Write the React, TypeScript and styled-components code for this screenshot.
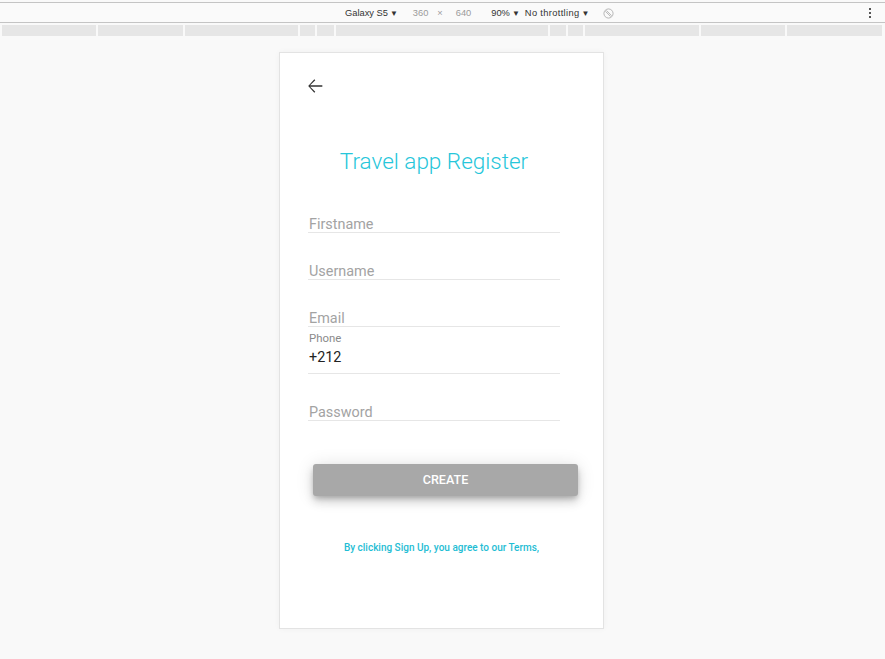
import React from "react";
import styled, { createGlobalStyle } from "styled-components";

const GlobalStyle = createGlobalStyle`
  html, body {
    margin: 0;
    padding: 0;
    background: #f9f9f9;
  }
  body {
    font-family: Roboto, "Noto Sans", sans-serif;
  }
  * {
    box-sizing: border-box;
  }
`;

const Page = styled.div`
  width: 885px;
  height: 659px;
  overflow: hidden;
  background: #f9f9f9;
  padding-top: 2px;
`;

const DeviceBar = styled.div`
  height: 21px;
  border-top: 1px solid #c4c4c4;
  border-bottom: 1px solid #c4c4c4;
  background: #fafafa;
  display: flex;
  align-items: center;
  padding: 1px 0 0 345px;
  font-family: "Liberation Sans", Arial, sans-serif;
  font-size: 9.3px;
  color: #333;
`;

const BarText = styled.span<{ $muted?: boolean; $gap?: number; $wide?: boolean }>`
  margin-left: ${({ $gap }) => $gap ?? 0}px;
  color: ${({ $muted }) => ($muted ? "#9a9a9a" : "#333")};
  letter-spacing: ${({ $wide }) => ($wide ? "0.35px" : "0")};
  white-space: nowrap;
`;

const Caret = styled.span`
  font-size: 8px;
  margin-left: 2px;
  color: #333;
`;

const RotateIcon = styled.svg`
  margin-left: 14px;
`;

const Kebab = styled.div`
  margin-left: auto;
  margin-right: 14px;
  display: flex;
  flex-direction: column;
  gap: 2px;

  span {
    width: 2px;
    height: 2px;
    background: #555;
  }
`;

const Ruler = styled.div`
  margin-top: 2px;
  height: 11px;
  display: flex;
  gap: 2px;
  padding-left: 2px;
`;

const RulerSegment = styled.div<{ $w: number }>`
  width: ${({ $w }) => $w}px;
  height: 100%;
  background: #e6e6e6;
`;

const Phone = styled.div`
  margin: 16px 0 0 279px;
  width: 325px;
  height: 577px;
  background: #fff;
  border: 1px solid #e3e3e3;
  box-shadow: 0 0 6px rgba(0, 0, 0, 0.04);
  display: flex;
  flex-direction: column;
`;

const BackButton = styled.button`
  margin: 22px 0 0 24px;
  padding: 0;
  width: 22px;
  height: 22px;
  border: none;
  background: none;
  display: flex;
  cursor: pointer;
`;

const Title = styled.h1`
  margin: 51px 0 0;
  padding-right: 15px;
  text-align: center;
  font-weight: 300;
  font-size: 22.5px;
  line-height: 26px;
  color: #26c6da;
`;

const Form = styled.form`
  margin: 12px 0 0 28px;
  width: 252px;
  display: flex;
  flex-direction: column;
`;

const Field = styled.div`
  height: 47px;
  display: flex;
  flex-direction: column;
  justify-content: flex-end;
  border-bottom: 1px solid #e6e6e6;
`;

const FloatLabel = styled.label`
  font-size: 11.4px;
  line-height: 14px;
  color: #8a8a8a;
  margin-bottom: 4px;
  padding-left: 1px;
`;

const Input = styled.input<{ $filled?: boolean }>`
  border: none;
  outline: none;
  padding: ${({ $filled }) => ($filled ? "0 0 7px 1px" : "1px 0 0 1px")};
  margin: 0;
  height: ${({ $filled }) => ($filled ? 24 : 17)}px;
  line-height: 17px;
  font-family: Roboto, sans-serif;
  font-size: 14.4px;
  color: #222;
  background: transparent;

  &::placeholder {
    color: #a3a3a3;
    opacity: 1;
  }
`;

const CreateButton = styled.button`
  margin: 43px 0 0 33px;
  width: 265px;
  height: 32px;
  padding: 0 0 2px;
  border: none;
  border-radius: 3px;
  background: #a8a8a8;
  color: #fff;
  font-family: Roboto, sans-serif;
  font-weight: 500;
  font-size: 12.6px;
  text-transform: uppercase;
  box-shadow: 0 3px 5px -1px rgba(0, 0, 0, 0.2), 0 6px 10px 0 rgba(0, 0, 0, 0.14),
    0 1px 18px 0 rgba(0, 0, 0, 0.12);
  cursor: pointer;
`;

const Terms = styled.p`
  margin: 45px 0 0;
  text-align: center;
  font-size: 10px;
  line-height: 13px;
  font-weight: 500;
  color: #1fbdd4;
`;

const segments = [94, 85, 113, 15, 17, 212, 16, 15, 114, 84, 95];

const fields = [
  { name: "firstname", placeholder: "Firstname" },
  { name: "username", placeholder: "Username" },
  { name: "email", placeholder: "Email" },
];

export default function App() {
  return (
    <Page>
      <GlobalStyle />
      <DeviceBar>
        <BarText>Galaxy S5</BarText>
        <Caret>▼</Caret>
        <BarText $muted $gap={15}>360</BarText>
        <BarText $muted $gap={9}>×</BarText>
        <BarText $muted $gap={13}>640</BarText>
        <BarText $gap={20}>90%</BarText>
        <Caret>▼</Caret>
        <BarText $gap={5} $wide>No throttling</BarText>
        <Caret>▼</Caret>
        <RotateIcon width="11" height="11" viewBox="0 0 12 12">
          <circle cx="6" cy="6" r="5" fill="none" stroke="#b0b0b0" strokeWidth="1" />
          <line x1="2.6" y1="3.6" x2="8.4" y2="9.4" stroke="#b0b0b0" strokeWidth="1" />
          <line x1="3.6" y1="2.6" x2="9.4" y2="8.4" stroke="#b0b0b0" strokeWidth="1" />
        </RotateIcon>
        <Kebab>
          <span />
          <span />
          <span />
        </Kebab>
      </DeviceBar>
      <Ruler>
        {segments.map((w, i) => (
          <RulerSegment key={i} $w={w} />
        ))}
      </Ruler>

      <Phone>
        <BackButton type="button" aria-label="back">
          <svg width="22" height="22" viewBox="0 0 24 24">
            <path
              d="M20 11.25H6.7l5.6-5.6-1.05-1.05L4.6 12l6.65 7.4 1.05-1.05-5.6-5.6H20z"
              fill="#333"
            />
          </svg>
        </BackButton>
        <Title>Travel app Register</Title>
        <Form>
          {fields.map((f) => (
            <Field key={f.name}>
              <Input name={f.name} placeholder={f.placeholder} />
            </Field>
          ))}
          <Field>
            <FloatLabel htmlFor="phone">Phone</FloatLabel>
            <Input id="phone" $filled defaultValue="+212" />
          </Field>
          <Field>
            <Input type="password" placeholder="Password" />
          </Field>
        </Form>
        <CreateButton type="button">Create</CreateButton>
        <Terms>By clicking Sign Up, you agree to our Terms,</Terms>
      </Phone>
    </Page>
  );
}
